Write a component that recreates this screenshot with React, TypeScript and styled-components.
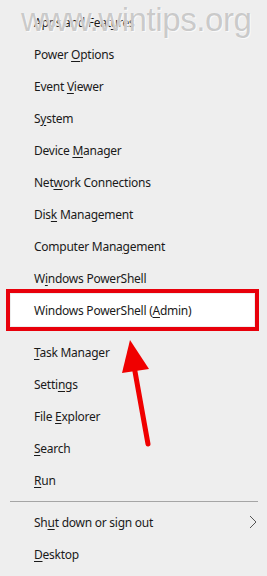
import React from 'react';
import styled, { createGlobalStyle } from 'styled-components';

const GlobalStyle = createGlobalStyle`
  html, body {
    margin: 0;
    padding: 0;
    background: #eeeeee;
  }
`;

const MenuEl = styled.div`
  position: relative;
  width: 267px;
  height: 576px;
  box-sizing: border-box;
  padding-top: 6px;
  background: #eeeeee;
  font-family: 'Noto Sans', 'Open Sans', sans-serif;
  font-size: 12px;
  letter-spacing: -0.25px;
  color: #1a1a1a;
  overflow: hidden;
`;

const Row = styled.div<{ $highlighted?: boolean }>`
  display: flex;
  align-items: center;
  justify-content: space-between;
  height: 32px;
  padding-right: 10px;
  padding-left: ${(p) => (p.$highlighted ? '23px' : '34px')};
  margin: ${(p) => (p.$highlighted ? '0 13px 0 11px' : '0')};
  background: ${(p) => (p.$highlighted ? '#ffffff' : 'transparent')};
  outline: ${(p) => (p.$highlighted ? '4px solid #e8000b' : 'none')};
  outline-offset: 1px;
  position: relative;
  z-index: ${(p) => (p.$highlighted ? 1 : 0)};
`;

const Key = styled.span`
  text-decoration: underline;
  text-underline-offset: 2px;
`;

const Separator = styled.div<{ $hidden?: boolean }>`
  height: 10px;
  display: flex;
  align-items: center;
  padding: 0 9px 0 10px;

  &::after {
    content: '';
    flex: 1;
    height: 1px;
    background: ${(p) => (p.$hidden ? 'transparent' : '#a5a5a5')};
  }
`;

const Watermark = styled.div`
  position: absolute;
  left: 21px;
  top: 3px;
  font-family: 'Liberation Sans', Arial, sans-serif;
  font-size: 33px;
  line-height: 1;
  letter-spacing: -0.4px;
  color: rgba(150, 150, 150, 0.5);
  text-shadow: 0 0 1px #ffffff, 1px 1px 0 rgba(255, 255, 255, 0.7);
  pointer-events: none;
  z-index: 2;
`;

const Overlay = styled.svg`
  position: absolute;
  left: 0;
  top: 0;
  pointer-events: none;
  z-index: 3;
`;

type Item = { before: string; key: string; after: string; sub?: boolean };

const items: (Item | 'sep' | 'hidden-sep')[] = [
  { before: 'Apps and Feat', key: 'u', after: 'res' },
  { before: 'Power ', key: 'O', after: 'ptions' },
  { before: 'Event ', key: 'V', after: 'iewer' },
  { before: 'S', key: 'y', after: 'stem' },
  { before: 'Device ', key: 'M', after: 'anager' },
  { before: 'Net', key: 'w', after: 'ork Connections' },
  { before: 'Dis', key: 'k', after: ' Management' },
  { before: 'Computer Mana', key: 'g', after: 'ement' },
  { before: 'W', key: 'i', after: 'ndows PowerShell' },
  { before: 'Windows PowerShell (', key: 'A', after: 'dmin)' },
  'hidden-sep',
  { before: '', key: 'T', after: 'ask Manager' },
  { before: 'Setti', key: 'n', after: 'gs' },
  { before: 'File ', key: 'E', after: 'xplorer' },
  { before: '', key: 'S', after: 'earch' },
  { before: '', key: 'R', after: 'un' },
  'sep',
  { before: 'Sh', key: 'u', after: 't down or sign out', sub: true },
  { before: '', key: 'D', after: 'esktop' },
];

const Chevron = () => (
  <svg width="8" height="14" viewBox="0 0 8 14">
    <path d="M1 1 L7 7 L1 13" fill="none" stroke="#555" strokeWidth="1" />
  </svg>
);

export default function App() {
  return (
    <>
      <GlobalStyle />
      <MenuEl>
        <Watermark>www.wintips.org</Watermark>
        {items.map((it, i) => {
          if (it === 'sep') return <Separator key={i} />;
          if (it === 'hidden-sep') return <Separator key={i} $hidden />;
          return (
            <Row key={i} $highlighted={it.key === 'A'}>
              <span>
                {it.before}
                <Key>{it.key}</Key>
                {it.after}
              </span>
              {it.sub && <Chevron />}
            </Row>
          );
        })}
        <Overlay width="267" height="576" viewBox="0 0 267 576">
          <line x1="148" y1="444" x2="134" y2="366" stroke="#f00000" strokeWidth="5" strokeLinecap="round" />
          <polygon points="130,340 122,373 149,369" fill="#f00000" />
        </Overlay>
      </MenuEl>
    </>
  );
}
